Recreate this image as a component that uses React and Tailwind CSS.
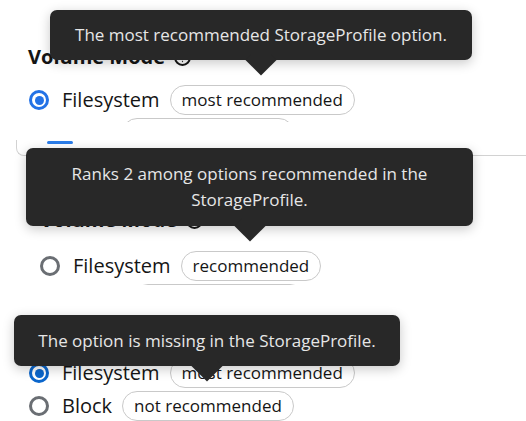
import React from "react";

function HelpIcon() {
  return (
    <svg width="17" height="17" viewBox="0 0 16 16" fill="none" stroke="#151515" strokeWidth="1.8">
      <circle cx="8" cy="8" r="7" />
      <path d="M5.9 6.1a2.1 2.1 0 0 1 4.1.6c0 1.4-2 1.8-2 3" strokeLinecap="round" />
      <circle cx="8" cy="11.8" r="0.6" fill="#151515" stroke="none" />
    </svg>
  );
}

function Radio({ checked, color = "#2372e6" }) {
  if (checked) {
    return (
      <div className="w-5 h-5 shrink-0 rounded-full border-[3px] flex items-center justify-center" style={{ borderColor: color }}>
        <div className="w-[9px] h-[9px] rounded-full" style={{ backgroundColor: color }} />
      </div>
    );
  }
  return <div className="w-5 h-5 shrink-0 rounded-full border-[3px] border-[#6a6e73]" />;
}

function Option({ checked, label, badge, color }) {
  return (
    <div className="flex items-center h-[30px]">
      <Radio checked={checked} color={color} />
      <span className="ml-[13px] text-[20px] text-[#151515]">{label}</span>
      <span className="ml-[10px] h-[30px] px-[11px] flex items-center rounded-full border border-[#c9c9c9] text-[17px] text-[#151515]">
        {badge}
      </span>
    </div>
  );
}

function Heading() {
  return (
    <div className="flex items-center gap-[9px] text-[20px] font-bold leading-[28px] text-[#151515]">
      <span>Volume Mode</span>
      <HelpIcon />
    </div>
  );
}

function Tooltip({ className, children }) {
  return (
    <div className={`absolute ${className} rounded-[7px] bg-[#282828] text-[#e6e6e6] text-[17px] leading-[26px] text-center flex items-center justify-center shadow-[0_3px_12px_rgba(0,0,0,0.22)]`}>
      <div className="absolute left-1/2 bottom-[-11px] -ml-[11px] w-[22px] h-[22px] rotate-45 bg-[#282828]" />
      <div className="relative">{children}</div>
    </div>
  );
}

export default function App() {
  return (
    <div className="w-[526px] h-[421px] bg-white overflow-hidden font-['Open_Sans',sans-serif]">
      {/* first shot */}
      <div className="relative h-[122px] overflow-hidden">
        <div className="pl-[28px] pt-[43px]">
          <Heading />
          <div className="mt-[14px] flex flex-col gap-[3px] pl-[1px]">
            <Option checked label="Filesystem" badge="most recommended" />
            <Option label="Block" badge="not recommended" />
          </div>
        </div>
        <Tooltip className="left-[50px] top-[10px] w-[422px] h-[50px]">
          The most recommended StorageProfile option.
        </Tooltip>
      </div>

      <div className="h-[18px]" />

      {/* second shot */}
      <div className="relative h-[145px] overflow-hidden">
        <div className="ml-[16px] h-[16px] border-l border-b border-[#d2d2d2] rounded-bl-[8px] pl-[30px] pt-[1px]">
          <div className="w-[26px] h-[3px] rounded-full bg-[#2b7de9]" />
        </div>
        <div className="pl-[40px] pt-[50px]">
          <Heading />
          <div className="mt-[17px] flex flex-col gap-[3px]">
            <Option label="Filesystem" badge="recommended" />
            <Option label="Block" badge="not recommended" />
          </div>
        </div>
        <Tooltip className="left-[26px] top-[8px] w-[447px] h-[78px]">
          Ranks 2 among options recommended in the
          <br />
          StorageProfile.
        </Tooltip>
      </div>

      {/* third shot */}
      <div className="relative h-[136px] overflow-hidden">
        <div className="pl-[29px] pt-[31px]">
          <Heading />
          <div className="mt-[14px] flex flex-col gap-[3px]">
            <Option checked label="Filesystem" badge="most recommended" color="#0b66cc" />
            <Option label="Block" badge="not recommended" />
          </div>
        </div>
        <Tooltip className="left-[14px] top-[30px] w-[386px] h-[51px]">
          The option is missing in the StorageProfile.
        </Tooltip>
      </div>
    </div>
  );
}
